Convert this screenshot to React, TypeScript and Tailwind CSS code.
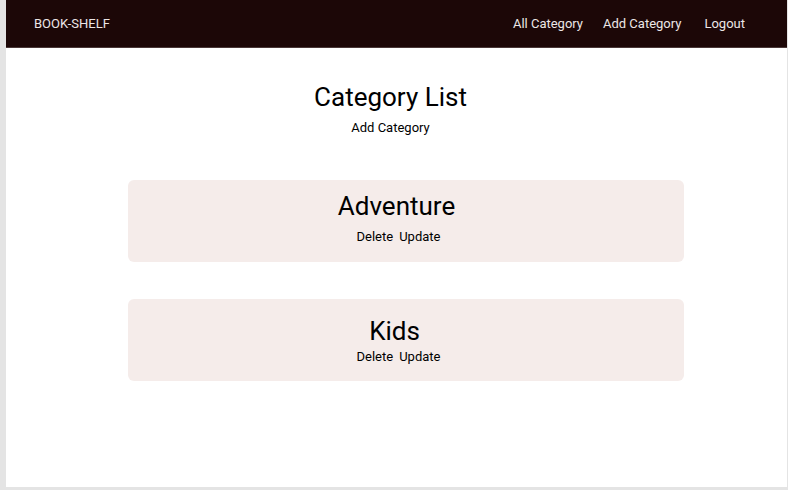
const categories = [
  { name: 'Adventure', titleClass: 'pt-[10px] pb-[6px] pr-[19px]' },
  { name: 'Kids', titleClass: 'pt-[16px] pb-[1px] pr-[23px]' },
];

const App = () => {
  return (
    <div className="h-[490px] bg-[#e4e4e4] pl-[6px] pr-[1px] pb-[3px] font-['Roboto',sans-serif]">
      <div className="h-full bg-white">
        {/* Navbar */}
        <nav className="h-12 bg-[#1c0707] border-b border-[#4a3838] flex items-center justify-between pl-[28px] pr-[42px]">
          <span className="text-[13px] text-[#ece6e6]">BOOK-SHELF</span>
          <div className="flex items-center gap-5 text-[13px] text-[#ece6e6]">
            <a href="#">All Category</a>
            <a href="#">Add Category</a>
            <a href="#" className="ml-[3px]">Logout</a>
          </div>
        </nav>

        {/* Header */}
        <div className="text-center pt-[33px] pr-[12px]">
          <h1 className="text-[26px] leading-[32px] text-black">Category List</h1>
          <a href="#" className="block text-[13px] leading-[18px] text-black mt-[6px]">Add Category</a>
        </div>

        {/* Cards */}
        <div className="ml-[122px] mr-[103px] mt-[43px] flex flex-col gap-[37px]">
          {categories.map((c) => (
            <div key={c.name} className="h-[82px] rounded-md bg-[#f5ecea] text-center">
              <h2 className={`text-[26px] leading-[32px] text-black ${c.titleClass}`}>{c.name}</h2>
              <div className="text-[13px] leading-[18px] text-black pr-[15px]">
                <a href="#">Delete</a>
                <a href="#" className="ml-[6px]">Update</a>
              </div>
            </div>
          ))}
        </div>
      </div>
    </div>
  );
};

export default App;
